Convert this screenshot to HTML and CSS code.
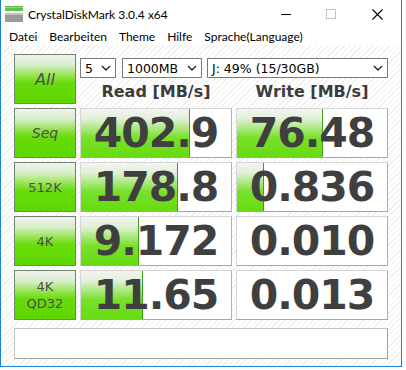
FILE: index.html
```html
<!DOCTYPE html>
<html>
<head>
    <title>CrystalDiskMark 3.0.4 x64</title>
    <link rel="stylesheet" href="styles.css">
</head>
<body>
<div class="window">
    <div class="titlebar">
        <svg class="app-icon" width="18" height="16" viewBox="0 0 18 16">
            <rect x="0" y="0" width="18" height="5" fill="#5fc24a"/>
            <rect x="0" y="1" width="18" height="1" fill="#8ad878"/>
            <rect x="0" y="7" width="18" height="9" fill="#9a9a9a"/>
            <rect x="0" y="7" width="18" height="2" fill="#c2c2c2"/>
            <rect x="2" y="11" width="3" height="2" fill="#5fd04a"/>
        </svg>
        <span class="title">CrystalDiskMark 3.0.4 x64</span>
        <div class="controls">
            <svg width="10" height="10" viewBox="0 0 10 10"><line x1="0" y1="5.5" x2="10" y2="5.5" stroke="#000" stroke-width="1"/></svg>
            <svg width="10" height="10" viewBox="0 0 10 10"><rect x="0.5" y="0.5" width="9" height="9" fill="none" stroke="#c4c4c4" stroke-width="1"/></svg>
            <svg width="11" height="11" viewBox="0 0 11 11"><path d="M0.5 0.5 L10.5 10.5 M10.5 0.5 L0.5 10.5" stroke="#000" stroke-width="1.1"/></svg>
        </div>
    </div>
    <div class="menubar">
        <span>Datei</span>
        <span>Bearbeiten</span>
        <span>Theme</span>
        <span>Hilfe</span>
        <span>Sprache(Language)</span>
    </div>

    <div class="content">
        <div class="board">
            <div class="btn btn-all">All</div>
            <div class="top">
                <div class="opts">
                    <div class="sel sel-count">5<svg viewBox="0 0 10 6"><path d="M1 1 L5 5 L9 1" /></svg></div>
                    <div class="sel sel-size">1000MB<svg viewBox="0 0 10 6"><path d="M1 1 L5 5 L9 1" /></svg></div>
                    <div class="sel sel-drive">J: 49% (15/30GB)<svg viewBox="0 0 10 6"><path d="M1 1 L5 5 L9 1" /></svg></div>
                </div>
                <div class="heads">
                    <div>Read [MB/s]</div>
                    <div>Write [MB/s]</div>
                </div>
            </div>

            <div class="btn btn-ital">Seq</div>
            <div class="cell"><div class="bar" style="width: 108px"></div><span>402.9</span></div>
            <div class="cell"><div class="bar" style="width: 85px"></div><span>76.48</span></div>

            <div class="btn">512K</div>
            <div class="cell"><div class="bar" style="width: 96px"></div><span>178.8</span></div>
            <div class="cell"><div class="bar" style="width: 26px"></div><span>0.836</span></div>

            <div class="btn">4K</div>
            <div class="cell"><div class="bar" style="width: 57px"></div><span>9.172</span></div>
            <div class="cell"><span>0.010</span></div>

            <div class="btn btn-two">4K<br>QD32</div>
            <div class="cell"><div class="bar" style="width: 61px"></div><span>11.65</span></div>
            <div class="cell"><span>0.013</span></div>
        </div>
        <div class="status"></div>
    </div>
</div>
</body>
</html>
```

FILE: styles.css
```css
body { margin: 0; background: #fff; font-family: "DejaVu Sans", sans-serif; }

.window { width: 400px; height: 366px; border: 1px solid #1883d7; border-top: none; display: flex; flex-direction: column; background: #fff; }

.titlebar { height: 28px; display: flex; align-items: center; font-family: Lato, sans-serif; font-size: 12px; color: #000; }
.app-icon { margin: 0 5px 1px 4px; }
.controls { margin-left: auto; display: flex; align-items: center; }
.controls svg:nth-child(1) { margin-right: 35px; }
.controls svg:nth-child(2) { margin-right: 36px; }
.controls svg:nth-child(3) { margin-right: 18px; }

.menubar { height: 17px; display: flex; align-items: center; gap: 12px; padding-left: 8px; font-family: Lato, sans-serif; font-size: 12px; color: #000; }

.content { flex: 1; padding: 9px 0 0 13px; background: repeating-linear-gradient(135deg, #fff 0 3px, #efefef 3px 4px); }

.board { display: grid; grid-template-columns: 62px 152px 152px; grid-auto-rows: 50px; gap: 4px; }

.btn { box-sizing: border-box; border: 1px solid #6e866e; display: flex; align-items: center; justify-content: center; text-align: center; font-size: 13px; color: #4e4e4e; background: linear-gradient(to bottom, #f2f2f2 0%, #d6eec6 22%, #96e452 42%, #68dc0c 58%, #5ed600 100%); }
.btn-all { font-size: 16px; font-style: italic; }
.btn-ital { font-size: 14px; font-style: italic; }
.btn-two { line-height: 17px; }

.top { grid-column: span 2; }
.opts { display: flex; padding-top: 4px; height: 20px; }
.sel { box-sizing: border-box; height: 20px; border: 1px solid #7a7a7a; background: #fff; display: flex; align-items: center; justify-content: space-between; padding: 0 4px 0 4px; font-size: 12.5px; color: #000; }
.sel svg { width: 10px; height: 6px; fill: none; stroke: #222; stroke-width: 1.4; }
.sel-count { width: 36px; margin-right: 6px; }
.sel-size { width: 80px; margin-right: 5px; }
.sel-drive { width: 181px; }
.heads { display: grid; grid-template-columns: 152px 152px; gap: 4px; margin-top: 4px; line-height: 20px; font-size: 16px; font-weight: bold; color: #3c3c3c; text-align: center; }

.cell { position: relative; box-sizing: border-box; border: 1px solid; border-color: #d6d6d6 #b0b0b0 #a6a6a6 #d6d6d6; background: #fff; text-align: center; font-size: 41px; font-weight: bold; letter-spacing: -1px; color: #3f3f3f; line-height: 47px; padding-top: 1px; overflow: hidden; }
.cell span { position: relative; }
.bar { position: absolute; left: 0; top: 0; bottom: 0; border-right: 1px solid #3f9e1c; background: linear-gradient(to bottom, #f4f4f4 0%, #e2f0d8 20%, #a8e878 42%, #78e02a 60%, #66dc10 100%); }

.status { box-sizing: border-box; width: 374px; height: 31px; margin-top: 8px; background: #fff; border: 1px solid; border-color: #c6c6c6 #a0a0a0 #a0a0a0 #c6c6c6; }
```
